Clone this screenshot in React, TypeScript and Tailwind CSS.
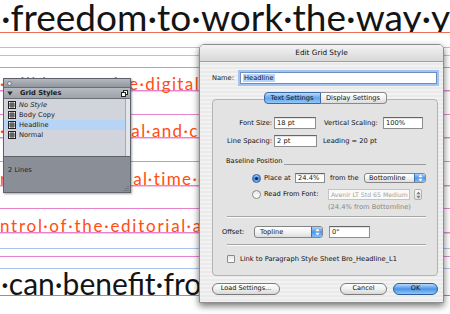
import React from "react";

const big = "font-['Lato',sans-serif] text-[37px] leading-[0.774] text-[#141414] whitespace-nowrap";
const mid = "font-['Lato',sans-serif] text-[30px] leading-[0.774] text-[#141414] whitespace-nowrap";
const org = "font-['Lato',sans-serif] text-[17px] leading-[0.774] tracking-[1.4px] text-[#ff4e14] whitespace-nowrap";
const orgWide = "font-['Lato',sans-serif] text-[17px] leading-[0.774] tracking-[1.75px] text-[#ff4e14] whitespace-nowrap";

function GridIcon() {
  return (
    <svg width="8" height="8" viewBox="0 0 8 8" className="shrink-0">
      <rect x="0.5" y="0.5" width="7" height="7" fill="#fff" stroke="#222" />
      <path d="M3 0.5V7.5M5 0.5V7.5M0.5 3H7.5M0.5 5H7.5" stroke="#222" strokeWidth="0.9" />
    </svg>
  );
}

function Arrows({ color = "#fff" }: { color?: string }) {
  return (
    <svg width="5" height="8" viewBox="0 0 5 8">
      <path d="M2.5 0.6L4.6 3.3H0.4Z M2.5 7.4L4.6 4.7H0.4Z" fill={color} />
    </svg>
  );
}

function StylesPanel() {
  return (
    <div className="absolute left-[3px] top-[78px] flex h-[115px] w-[128px] flex-col border border-[#5e626a] bg-[#8a8e96] font-['DejaVu_Sans',sans-serif] text-[6.7px] text-[#1b1b1b] shadow-[1px_1px_2px_rgba(0,0,0,0.35)]">
      <div className="flex h-[9px] items-center border-b border-[#6a6e76] bg-gradient-to-b from-[#b4b8bf] to-[#92969e] pl-[3px]">
        <div className="h-[5px] w-[5px] rounded-full border border-[#747880] bg-[#dfe1e4]" />
      </div>
      <div className="flex h-[11px] items-center border-b border-[#6a6e76] bg-gradient-to-b from-[#b7bac1] to-[#9ea2a9] pl-[3px] pr-[2px]">
        <svg width="6" height="5" viewBox="0 0 6 5">
          <path d="M0.3 0.5H5.7L3 4.6Z" fill="#2a2a2a" />
        </svg>
        <span className="ml-[7px] font-bold">Grid Styles</span>
        <svg width="7" height="7" viewBox="0 0 7 7" className="ml-auto">
          <rect x="2.5" y="0.5" width="4" height="4" fill="#fff" stroke="#222" />
          <rect x="0.5" y="2.5" width="4" height="4" fill="#fff" stroke="#222" />
        </svg>
      </div>
      <div className="flex h-[58px] border-b border-[#5e626a] bg-[#d1d4da]">
        <div className="flex flex-1 flex-col pt-[1px]">
          <div className="flex h-[10px] items-center gap-[3px] pl-[4px]">
            <GridIcon />
            <span className="italic">No Style</span>
          </div>
          <div className="flex h-[10px] items-center gap-[3px] pl-[4px]">
            <GridIcon />
            <span>Body Copy</span>
          </div>
          <div className="flex h-[10px] items-center gap-[3px] bg-[#b7d4f6] pl-[4px]">
            <GridIcon />
            <span>Headline</span>
          </div>
          <div className="flex h-[10px] items-center gap-[3px] pl-[4px]">
            <GridIcon />
            <span>Normal</span>
          </div>
        </div>
        <div className="w-[5px] border-l border-[#a7aab0] bg-[#e3e5e9]" />
      </div>
      <div className="relative flex-1 pl-[4px] pt-[8px]">
        <span>2 Lines</span>
        <svg width="6" height="6" viewBox="0 0 6 6" className="absolute bottom-[1px] right-[1px]">
          <path d="M5 1v1M3 3v1M5 3v1M1 5v1M3 5v1M5 5v1" stroke="#5c6068" strokeWidth="1" />
        </svg>
      </div>
    </div>
  );
}

const field =
  "flex items-center overflow-hidden border border-[#8e8e8e] border-t-[#666] bg-white pl-[2px] shadow-[inset_0_1px_1px_rgba(0,0,0,0.12)]";
const popup =
  "flex items-center overflow-hidden rounded-[3px] border border-[#858585] bg-gradient-to-b from-white via-[#f3f3f3] to-[#dedede]";
const blueKnob =
  "ml-auto flex h-full w-[11px] items-center justify-center border-l border-[#3d6fb3] bg-gradient-to-b from-[#a9d2fa] via-[#4e97e8] to-[#86c0f6]";

function EditDialog() {
  return (
    <div className="absolute left-[199px] top-[44px] flex h-[259px] w-[245px] flex-col whitespace-nowrap rounded-t-[5px] border border-[#8e8e8e] bg-[image:repeating-linear-gradient(180deg,#f2f2f2_0px,#f2f2f2_2px,#eaeaea_2px,#eaeaea_4px)] font-['DejaVu_Sans',sans-serif] text-[6.7px] text-[#111] shadow-[0_3px_7px_rgba(0,0,0,0.55)]">
      <div className="flex h-[17px] items-center justify-center rounded-t-[4px] border-b border-[#a0a0a0] bg-gradient-to-b from-[#f3f3f3] to-[#d8d8d8] text-[7.3px]">
        Edit Grid Style
      </div>
      <div className="flex flex-col pl-[12px] pr-[5px]">
        <div className="mt-[10px] flex h-[12px] items-center">
          <span className="w-[28px]">Name:</span>
          <div className="flex h-[12px] w-[197px] items-center border border-[#6d8fc0] bg-white pl-[2px] ring-2 ring-[#a3c4ee]">
            <span className="bg-[#b4d4fc] px-[1px] leading-[8px]">Headline</span>
          </div>
        </div>

        <div className="mt-[15px] flex h-[177px] w-[226px] flex-col rounded-[4px] border border-[#b3b3b3] bg-[#e3e3e3]">
          <div className="-mt-[8px] flex h-[12px] self-center">
            <div className="flex w-[57px] items-center justify-center rounded-l-[4px] border border-[#3a68a8] bg-gradient-to-b from-[#bcdcfb] via-[#62a5ec] to-[#93c7f6]">
              Text Settings
            </div>
            <div className="flex w-[66px] items-center justify-center rounded-r-[4px] border border-l-0 border-[#8a8a8a] bg-gradient-to-b from-white via-[#f2f2f2] to-[#dcdcdc]">
              Display Settings
            </div>
          </div>

          <div className="mt-[13px] flex h-[12px] items-center">
            <span className="w-[61px] pr-[2px] text-right">Font Size:</span>
            <div className={`${field} h-[12px] w-[42px]`}>18 pt</div>
            <span className="ml-[8px] w-[59px]">Vertical Scaling:</span>
            <div className={`${field} h-[12px] w-[40px]`}>100%</div>
          </div>

          <div className="mt-[6px] flex h-[12px] items-center">
            <span className="w-[61px] pr-[2px] text-right">Line Spacing:</span>
            <div className={`${field} h-[12px] w-[43px]`}>2 pt</div>
            <span className="ml-[6px]">Leading = 20 pt</span>
          </div>

          <div className="mt-[9px] flex h-[10px] items-start pl-[13px] pr-[11px]">
            <span className="leading-[10px]">Baseline Position</span>
            <div className="ml-[1px] mt-[8px] h-0 flex-1 border-t border-[#9a9a9a]" />
          </div>

          <div className="mt-[7px] flex h-[10px] items-center pl-[39px]">
            <div className="flex h-[9px] w-[9px] items-center justify-center rounded-full border border-[#2f5f9f] bg-gradient-to-b from-[#9fcaf8] via-[#3f86e0] to-[#7ab8f3]">
              <div className="h-[3px] w-[3px] rounded-full bg-[#16243a]" />
            </div>
            <span className="ml-[3px] w-[31px]">Place at</span>
            <div className={`${field} h-[10px] w-[30px]`}>24.4%</div>
            <span className="ml-[5px] w-[34px]">from the</span>
            <div className={`${popup} h-[10px] w-[62px] pl-[4px]`}>
              <span>Bottomline</span>
              <div className={blueKnob}>
                <Arrows />
              </div>
            </div>
          </div>

          <div className="mt-[6px] flex h-[11px] items-center pl-[39px]">
            <div className="h-[9px] w-[9px] rounded-full border border-[#8a8a8a] bg-gradient-to-b from-[#e8e8e8] to-white" />
            <span className="ml-[3px] w-[64px]">Read From Font:</span>
            <div className="flex h-[11px] w-[82px] items-center overflow-hidden border border-[#c4c4c4] bg-[#fafafa] pl-[2px] text-[6.2px] text-[#a2a2a2]">
              Avenir LT Std 65 Medium
            </div>
            <div className="ml-[4px] flex h-[11px] w-[8px] items-center justify-center rounded-[2px] border border-[#b0b0b0] bg-gradient-to-b from-white to-[#e2e2e2]">
              <Arrows color="#7a7a7a" />
            </div>
          </div>

          <div className="mt-[3px] flex h-[8px] items-center pl-[115px] text-[#858585]">
            (24.4% from Bottomline)
          </div>

          <div className="ml-[14px] mr-[11px] mt-[5px] h-[2px] border-b border-t border-b-[#fafafa] border-t-[#a5a5a5]" />

          <div className="mt-[8px] flex h-[12px] items-center pl-[9px]">
            <span className="w-[32px]">Offset:</span>
            <div className={`${popup} h-[12px] w-[69px] pl-[5px]`}>
              <span>Topline</span>
              <div className={blueKnob}>
                <Arrows />
              </div>
            </div>
            <div className={`${field} ml-[6px] h-[12px] w-[41px]`}>0"</div>
          </div>

          <div className="ml-[14px] mr-[11px] mt-[6px] h-[2px] border-b border-t border-b-[#fafafa] border-t-[#a5a5a5]" />

          <div className="mt-[8px] flex h-[10px] items-center pl-[14px]">
            <div className="h-[8px] w-[8px] rounded-[1px] border border-[#8a8a8a] bg-gradient-to-b from-[#e6e6e6] to-white" />
            <span className="ml-[5px]">Link to Paragraph Style Sheet Bro_Headline_L1</span>
          </div>
        </div>

        <div className="mt-[7px] flex h-[12px] w-[226px] text-[6.5px]">
          <div className="flex w-[68px] items-center justify-center rounded-full border border-[#7c7c7c] bg-gradient-to-b from-white via-[#f0f0f0] to-[#d8d8d8]">
            Load Settings...
          </div>
          <div className="ml-auto flex w-[47px] items-center justify-center rounded-full border border-[#7c7c7c] bg-gradient-to-b from-white via-[#f0f0f0] to-[#d8d8d8]">
            Cancel
          </div>
          <div className="ml-[6px] flex w-[45px] items-center justify-center rounded-full border border-[#2d5c9c] bg-gradient-to-b from-[#b5d9fc] via-[#4a94e6] to-[#8cc6f7]">
            OK
          </div>
        </div>
      </div>
    </div>
  );
}

export default function App() {
  return (
    <div className="relative h-[314px] w-[450px] overflow-hidden bg-white">
      <div className="flex flex-col">
        <div className="flex h-[33px] items-end overflow-hidden border-b border-[#ee6e56] pl-[1px]">
          <span className={big}>·freedom·to·work·the·way·you</span>
        </div>
        <div className="h-[15px] border-b border-[#abc4ef]" />
        <div className="h-[8px] border-b border-[#abc4ef]" />
        <div className="h-[12px] border-b border-[#e784cd]" />
        <div className="flex h-[23px] items-end border-b border-[#e784cd] shadow-[0_1px_0_#f4c6ea]">
          <span className={org}>·will·be·creative·digital·</span>
        </div>
        <div className="h-[24px] border-b border-[#e784cd]" />
        <div className="flex h-[23px] items-end border-b border-[#e784cd] shadow-[0_1px_0_#f4c6ea]">
          <span className={org}>·new·commercial·and·creative·</span>
        </div>
        <div className="h-[24px] border-b border-[#e784cd]" />
        <div className="flex h-[24px] items-end border-b border-[#e784cd] shadow-[0_1px_0_#f4c6ea]">
          <span className={org}>r·we·work·in·real·time·control·</span>
        </div>
        <div className="h-[23px] border-b border-[#e784cd]" />
        <div className="flex h-[24px] items-end border-b border-[#e784cd] shadow-[0_1px_0_#f4c6ea]">
          <span className={orgWide}>ntrol·of·the·editorial·and·</span>
        </div>
        <div className="h-[16px] border-b border-[#abc4ef]" />
        <div className="h-[8px] border-b border-[#e784cd]" />
        <div className="h-[12px] border-b border-[#abc4ef]" />
        <div className="flex h-[27px] items-end border-b border-[#ee6e56] pl-[1px]">
          <span className={mid}>·can·benefit·from·the·</span>
        </div>
      </div>
      <StylesPanel />
      <EditDialog />
    </div>
  );
}
